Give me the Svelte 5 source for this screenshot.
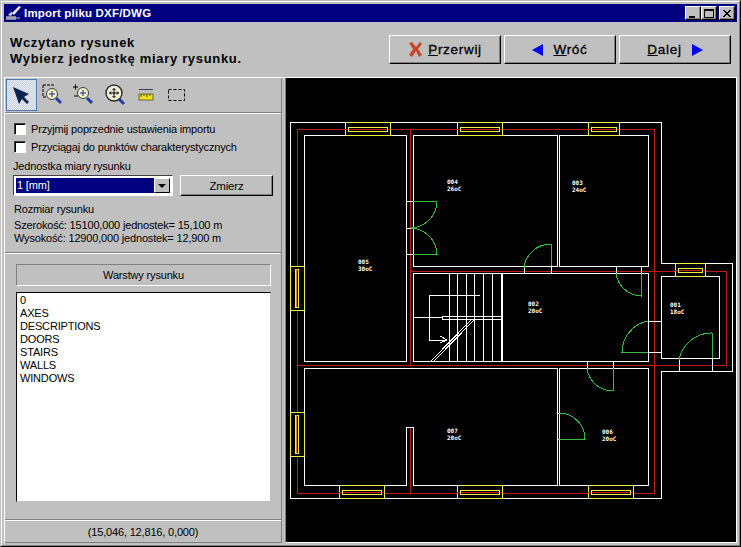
<script>
  const hWindows = [
    [345, 390, 122, 135], [457, 502, 122, 135], [588, 619, 122, 135],
    [675, 705, 263, 276], [339, 384, 485, 498], [457, 502, 485, 498], [588, 633, 485, 498]
  ];
  const vWindows = [[290, 304, 266, 310], [290, 304, 412, 456]];

  const walls = [
    "290,122 661,122 661,263 732,263 732,371 661,371 661,498 290,498 290,122",
    "304,135 406,135 406,361 304,361 304,135",
    "413,135 557,135 557,266 413,266 413,135",
    "559,135 648,135 648,266 559,266 559,135",
    "413,273 648,273 648,361 413,361 413,273",
    "661,276 719,276 719,358 661,358 661,276",
    "304,368 557,368 557,485 413,485 413,427 406,427 406,485 304,485 304,368",
    "559,368 648,368 648,485 559,485 559,368",
    "406,201 413,201", "406,228 413,228", "406,254 413,254",
    "524,266 524,273", "551,266 551,273", "616,266 616,273", "641,266 641,273",
    "648,321 661,321", "648,352 661,352", "679,358 679,371", "712,358 712,371",
    "587,361 587,368", "613,361 613,368", "557,413 559,413", "557,439 559,439"
  ];
  const red = [
    "297,129 654,129 654,493 297,493 297,129",
    "410,129 410,365", "410,427 410,493",
    "410,271 726,271 726,365 297,365"
  ];
  const doors = [
    "M413 201H437A27 27 0 0 1 411 228",
    "M413 254H437A27 27 0 0 0 411 228",
    "M551 266V244A27 27 0 0 0 524 268",
    "M641 273V296A26 26 0 0 1 616 273",
    "M648 352H622A32 32 0 0 1 648 321",
    "M712 358V333A33 33 0 0 0 679 360",
    "M613 368V391A26 26 0 0 1 587 368",
    "M559 439H585A26 26 0 0 0 559 413"
  ];
  const stairs = [449, 457, 466, 474, 483, 492];
  const labels = [
    ["004", "26oC", 447, 184], ["003", "24oC", 572, 185], ["005", "30oC", 358, 264],
    ["002", "20oC", 528, 306], ["001", "18oC", 670, 307], ["007", "20oC", 447, 433], ["006", "20oC", 602, 434]
  ];
  const layers = ["0", "AXES", "DESCRIPTIONS", "DOORS", "STAIRS", "WALLS", "WINDOWS"];
</script>

<div class="win">
  <div class="frame">
    <div class="title">
      <svg class="appicon" width="17" height="16" viewBox="0 0 17 16">
        <path d="M1 11h10v4H1z" fill="#808098" />
        <path d="M3 10l3-3 2 1-2 3z" fill="#d0d0d0" />
        <path d="M7 8l7-7 2 1-7 8z" fill="#e8e8e8" />
        <path d="M1 13h14" stroke="#c0c0e0" />
      </svg>
      <span class="titletext">Import pliku DXF/DWG</span>
      <div class="caption">
        <button class="capbtn"><i class="min"></i></button>
        <button class="capbtn"><i class="max"></i></button>
        <button class="capbtn close">
          <svg width="8" height="7" viewBox="0 0 8 7"><path d="M0 0l7 7M1 0l7 7M7 0L0 7M8 0L1 7" stroke="#000" fill="none" /></svg>
        </button>
      </div>
    </div>

    <div class="header">
      <div class="message">Wczytano rysunek<br />Wybierz jednostkę miary rysunku.</div>
      <div class="actions">
        <button class="btn">
          <svg width="15" height="15" viewBox="0 0 15 15"><path d="M1 1l3-1 4 5 4-5 2 2-4 5 4 6-3 2-3-6-4 6-3-2 4-6z" fill="#c8452c" /></svg>
          <span><u>P</u>rzerwij</span>
        </button>
        <button class="btn nav">
          <svg width="11" height="12" viewBox="0 0 11 12"><path d="M0 6L11 0V12z" fill="#0000f0" /></svg>
          <span><u>W</u>róć</span>
        </button>
        <button class="btn nav">
          <span><u>D</u>alej</span>
          <svg width="11" height="12" viewBox="0 0 11 12"><path d="M11 6L0 0V12z" fill="#0000f0" /></svg>
        </button>
      </div>
    </div>

    <div class="main">
      <div class="left">
        <div class="toolbar">
          <div class="tool active">
            <svg width="17" height="17" viewBox="0 0 17 17"><path d="M0 0L16 7 11 10 16 15 14 17 9 12 6 17z" fill="#0a2450" /></svg>
          </div>
          <div class="tool">
            <svg width="22" height="22" viewBox="0 0 22 22">
              <path d="M1 1h12M1 1v12M1 13h4" stroke="#000" stroke-dasharray="3 1" fill="none" />
              <path d="M14 14l5 5" stroke="#2040a0" stroke-width="3" />
              <circle cx="10" cy="10" r="5.500" fill="#f0f0c0" stroke="#404040" />
              <path d="M7 10h6M10 7v6" stroke="#2020a0" />
            </svg>
          </div>
          <div class="tool">
            <svg width="22" height="22" viewBox="0 0 22 22">
              <path d="M0 3h5M2.500 0.500v5M1 12h4" stroke="#000" fill="none" />
              <path d="M14 14l5 5" stroke="#2040a0" stroke-width="3" />
              <circle cx="10" cy="9" r="5.500" fill="#f0f0c0" stroke="#404040" />
              <path d="M7 9h6M10 6v6" stroke="#2020a0" />
            </svg>
          </div>
          <div class="tool">
            <svg width="22" height="22" viewBox="0 0 22 22">
              <path d="M14 14l6 6" stroke="#2040a0" stroke-width="3" />
              <circle cx="10" cy="9" r="8" fill="#f0f0d8" stroke="#303030" stroke-width="1.500" />
              <path d="M5.500 9h9M10 4.500v9M8.500 6L10 4.500 11.500 6M8.500 12l1.500 1.500 1.500-1.500M7 7.500L5.500 9 7 10.500M13 7.500L14.500 9 13 10.500" stroke="#000" fill="none" />
            </svg>
          </div>
          <div class="tool">
            <svg width="16" height="12" viewBox="0 0 16 12">
              <path d="M1 .500h14" stroke="#404040" />
              <rect x="1" y="5" width="14" height="6" fill="#f0e020" stroke="#505020" stroke-width=".8" />
              <path d="M3 5v3M6 5v2M9 5v3M12 5v2" stroke="#505020" />
            </svg>
          </div>
          <div class="tool">
            <svg width="17" height="12" viewBox="0 0 17 12"><rect x=".5" y=".5" width="16" height="11" fill="none" stroke="#000" stroke-dasharray="3 2" /></svg>
          </div>
        </div>

        <div class="options">
          <label class="check"><span class="box"></span>Przyjmij poprzednie ustawienia importu</label>
          <label class="check"><span class="box"></span>Przyciągaj do punktów charakterystycznych</label>
          <div class="cap">Jednostka miary rysunku</div>
          <div class="unitrow">
            <div class="combo">
              <div class="value">1 [mm]</div>
              <div class="drop"><i></i></div>
            </div>
            <button class="btn small">Zmierz</button>
          </div>
          <div class="size">
            <div>Rozmiar rysunku</div>
            <div class="dims">Szerokość: 15100,000 jednostek= 15,100 m</div>
            <div>Wysokość: 12900,000 jednostek= 12,900 m</div>
          </div>
        </div>

        <div class="layers">
          <div class="laycap">Warstwy rysunku</div>
          <ul class="list">
            {#each layers as l}
              <li>{l}</li>
            {/each}
          </ul>
        </div>

        <div class="status">(15,046, 12,816, 0,000)</div>
      </div>

      <div class="canvas">
        <svg class="plan" width="450" height="464" viewBox="286 78 450 464" shape-rendering="crispEdges">
          <g fill="none" stroke="#c01818">
            {#each red as p}<polyline points={p} />{/each}
          </g>
          <g fill="none" stroke="#fff">
            {#each walls as p}<polyline points={p} />{/each}
            {#each stairs as x}<path d="M{x} 273V361" />{/each}
            <path d="M502 273V361" stroke-width="2" />
            <rect x="442" y="316" width="60" height="3" />
            <path d="M413 317H442M480 295H429V340H447M440 336L447 340 440 343" />
            <path d="M431 361L471 320M434 361L474 320" />
          </g>
          <g fill="none" stroke="#f0f040">
            {#each hWindows as [x1, x2, y1, y2]}
              <rect x={x1} y={y1} width={x2 - x1} height={y2 - y1} fill="#000" />
              <path d="M{x1} {y1 + 7}H{x2}" stroke="#c01818" />
              <rect x={x1 + 3} y={y1 + 5} width={x2 - x1 - 6} height="4" />
            {/each}
            {#each vWindows as [x1, x2, y1, y2]}
              <rect x={x1} y={y1} width={x2 - x1} height={y2 - y1} fill="#000" />
              <rect x={x1 + 5} y={y1 + 3} width="3" height={y2 - y1 - 6} />
              <path d="M{x1 + 6} {y1 + 3}V{y2 - 3}" stroke="#f08020" />
            {/each}
          </g>
          <g fill="none" stroke="#30c040">
            {#each doors as d}<path {d} />{/each}
          </g>
          <g class="tags" fill="#fff">
            {#each labels as [a, b, x, y]}
              <text {x} {y}>{a}</text>
              <text {x} y={y + 7}>{b}</text>
            {/each}
          </g>
        </svg>
      </div>
    </div>
  </div>
</div>

<style>
  :global(body) {
    margin: 0;
    background: #c0c0c0;
  }
  .win {
    box-sizing: border-box;
    width: 741px;
    height: 547px;
    border: 1px solid;
    border-color: #c0c0c0 #000 #000 #c0c0c0;
    font-family: "Liberation Sans", Arial, sans-serif;
    font-size: 11px;
    letter-spacing: -0.17px;
    color: #000;
    background: #c0c0c0;
  }
  .frame {
    box-sizing: border-box;
    height: 100%;
    border: 1px solid;
    border-color: #fff #808080 #808080 #fff;
    padding: 2px;
    display: flex;
    flex-direction: column;
  }
  .title {
    height: 18px;
    flex: none;
    background: #000080;
    color: #fff;
    display: flex;
    align-items: center;
    font-weight: bold;
    font-size: 11.5px;
    letter-spacing: 0.2px;
  }
  .appicon {
    margin: 0 2px 0 1px;
  }
  .caption {
    margin-left: auto;
    display: flex;
    margin-right: 2px;
  }
  .capbtn {
    width: 16px;
    height: 14px;
    padding: 0;
    background: #c0c0c0;
    border: 1px solid;
    border-color: #fff #000 #000 #fff;
    box-shadow: inset -1px -1px #808080;
    display: flex;
    align-items: center;
    justify-content: center;
    position: relative;
  }
  .close {
    margin-left: 2px;
  }
  .min {
    display: block;
    width: 6px;
    height: 2px;
    background: #000;
    margin-top: 7px;
    margin-right: 2px;
  }
  .max {
    display: block;
    box-sizing: border-box;
    width: 10px;
    height: 9px;
    border: 1px solid #000;
    border-top-width: 2px;
  }
  .header {
    height: 55px;
    flex: none;
    display: flex;
    align-items: flex-start;
    justify-content: space-between;
    padding-left: 6px;
    padding-right: 6px;
    box-sizing: border-box;
  }
  .message {
    font-size: 13px;
    font-weight: bold;
    line-height: 16px;
    letter-spacing: 0.68px;
    padding-top: 13px;
  }
  .actions {
    display: flex;
    gap: 3px;
    padding-top: 13px;
  }
  .btn {
    box-sizing: border-box;
    width: 112px;
    height: 29px;
    background: #c0c0c0;
    border: 1px solid;
    border-color: #fff #000 #000 #fff;
    box-shadow: inset -1px -1px #808080;
    font-family: "Liberation Sans", Arial, sans-serif;
    font-size: 13.5px;
    letter-spacing: 0.7px;
    -webkit-text-stroke: 0.3px #000;
    color: #000;
    display: flex;
    align-items: center;
    justify-content: center;
    gap: 5px;
    padding: 0;
  }
  .btn.nav {
    gap: 10px;
  }
  .btn.small {
    width: 93px;
    height: 21px;
    font-size: 11.5px;
    letter-spacing: -0.2px;
    -webkit-text-stroke: 0;
    flex: none;
  }
  .main {
    flex: 1;
    min-height: 0;
    display: flex;
    gap: 3px;
    border-top: 1px solid #fff;
  }
  .left {
    box-sizing: border-box;
    width: 278px;
    flex: none;
    border-left: 1px solid #fff;
    border-right: 1px solid #808080;
    display: flex;
    flex-direction: column;
  }
  .toolbar {
    height: 35px;
    flex: none;
    box-sizing: border-box;
    display: flex;
    padding: 1px 0 0 1px;
    border-bottom: 1px solid #808080;
  }
  .tool {
    box-sizing: border-box;
    width: 31px;
    height: 32px;
    display: flex;
    align-items: center;
    justify-content: center;
  }
  .active {
    border: 1px solid #5078b0;
    background: repeating-conic-gradient(#e8ecf4 0 25%, #c8d0e0 0 50%) 0 0 / 2px 2px;
  }
  .options {
    height: 140px;
    flex: none;
    box-sizing: border-box;
    border-top: 1px solid #fff;
    border-bottom: 1px solid #808080;
    padding: 9px 8px 0;
  }
  .check {
    display: flex;
    align-items: center;
    height: 18px;
    margin-left: 1px;
    gap: 5px;
    margin-top: -3px;
    margin-bottom: 3px;
  }
  .box {
    box-sizing: border-box;
    width: 12px;
    height: 12px;
    background: #fff;
    border: 1px solid;
    border-color: #404040 #fff #fff #404040;
    box-shadow: inset 1px 1px #000;
  }
  .cap {
    line-height: 13px;
    margin-top: 4px;
  }
  .unitrow {
    display: flex;
    margin-top: 2px;
    gap: 7px;
  }
  .combo {
    box-sizing: border-box;
    width: 160px;
    height: 21px;
    background: #fff;
    border: 1px solid;
    border-color: #404040 #fff #fff #404040;
    padding: 2px;
    display: flex;
  }
  .value {
    flex: 1;
    background: #000080;
    color: #fff;
    line-height: 15px;
    padding-left: 1px;
  }
  .drop {
    box-sizing: border-box;
    width: 16px;
    background: #c0c0c0;
    border: 1px solid;
    border-color: #fff #000 #000 #fff;
    display: flex;
    align-items: center;
    justify-content: center;
  }
  .drop i {
    border-left: 4px solid transparent;
    border-right: 4px solid transparent;
    border-top: 4px solid #000;
  }
  .size {
    margin-top: 7px;
    margin-left: 1px;
    line-height: 13px;
  }
  .dims {
    margin-top: 3px;
  }
  .layers {
    flex: 1;
    min-height: 0;
    border-top: 1px solid #fff;
    padding: 10px 10px 0 11px;
    display: flex;
    flex-direction: column;
    gap: 6px;
  }
  .laycap {
    box-sizing: border-box;
    height: 22px;
    border: 1px solid;
    border-color: #808080 #fff #fff #808080;
    text-align: center;
    line-height: 20px;
    flex: none;
  }
  .list {
    box-sizing: border-box;
    list-style: none;
    height: 210px;
    margin: 0;
    padding: 1px 3px;
    background: #fff;
    border: 1px solid;
    border-color: #000 #c0c0c0 #c0c0c0 #000;
  }
  .list li {
    line-height: 13px;
  }
  .status {
    height: 24px;
    flex: none;
    box-sizing: border-box;
    border-top: 1px solid #808080;
    border-bottom: 1px solid #808080;
    box-shadow: inset 0 1px #fff;
    text-align: center;
    line-height: 24px;
  }
  .canvas {
    box-sizing: border-box;
    flex: 1;
    border: 1px solid;
    border-top: 0;
    border-color: #808080 #fff #fff #808080;
    background: #000;
    overflow: hidden;
  }
  .plan {
    display: block;
  }
  .tags {
    font-family: "DejaVu Sans Mono", monospace;
    font-size: 6px;
    font-weight: bold;
    letter-spacing: 0;
  }
</style>
